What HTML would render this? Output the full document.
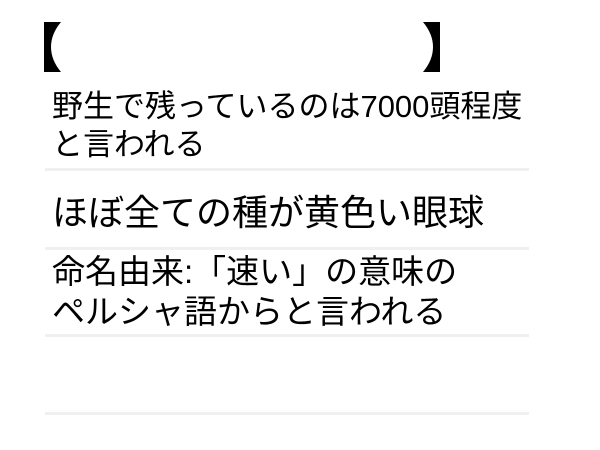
<!DOCTYPE html>
<html><head><meta charset="utf-8"><style>
body{margin:0;width:600px;height:450px;background:#fff;position:relative;overflow:hidden;font-family:"Liberation Sans","Noto Sans CJK JP",sans-serif;color:#000}
.t{position:absolute;left:52px;white-space:nowrap;font-size:31px;line-height:38px}
.l{position:absolute;left:45px;width:484px;height:3px;background:#f0f0f0}
</style></head><body>
<svg style="position:absolute;left:0;top:0" width="600" height="100">
<path d="M44,22 H61 Q51,34 51,47 Q51,60 61,72 H44 Z" fill="#000"/>
<path d="M440,22 H423 Q433,34 433,47 Q433,60 423,72 H440 Z" fill="#000"/>
</svg>
<div class="t" style="top:88px">野生で残っているのは7000頭程度<br>と言われる</div>
<div class="l" style="top:168px"></div>
<div class="t" style="top:191px;font-size:36px;line-height:44px">ほぼ全ての種が黄色い眼球</div>
<div class="l" style="top:247px"></div>
<div class="t" style="top:252px;font-size:33px;line-height:40px">命名由来:「速い」の意味の<br>ペルシャ語からと言われる</div>
<div class="l" style="top:334px"></div>
<div class="l" style="top:412px"></div>
</body></html>
